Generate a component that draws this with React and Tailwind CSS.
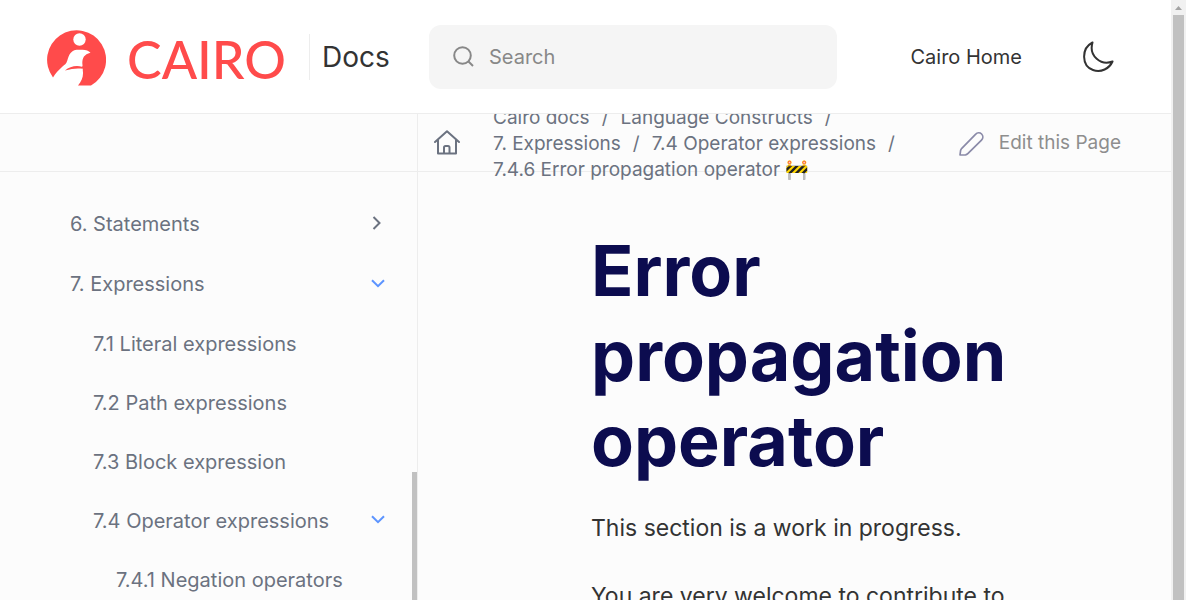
import React from "react";

const sections = [
  { label: "6. Statements", level: 0, state: "closed" },
  { label: "7. Expressions", level: 0, state: "open" },
  { label: "7.1 Literal expressions", level: 1 },
  { label: "7.2 Path expressions", level: 1 },
  { label: "7.3 Block expression", level: 1 },
  { label: "7.4 Operator expressions", level: 1, state: "open" },
  { label: "7.4.1 Negation operators", level: 2 },
];

const indents = [
  "h-[60px] pl-[70px]",
  "h-[59px] pl-[93px]",
  "h-[60px] pl-[116px]",
];

const crumbs = [
  "Cairo docs",
  "Language Constructs",
  "7. Expressions",
  "7.4 Operator expressions",
];

function CairoMark() {
  return (
    <svg width="60" height="58" viewBox="0 0 60 58" aria-hidden="true">
      <path
        fill="#ff4b4b"
        d="M7 49.500A29.500 29.500 0 1 1 45 57.500H32C35.500 53.500 37.200 49 37 44.500C36.900 42.800 36.500 41.500 37 40.800C31.500 40 26 40.500 19 42.500C23.500 38.700 30 37 36 38.800C37 38 36.300 36.500 36.300 35C36.400 30 38 26.500 44.500 24.800C42.500 22.300 39 21.500 35 21.800H30.500C24 22.800 22.800 28 21.300 32.500C20.300 36 18.500 36.800 16.500 38.500C12.500 42 9.500 45.500 7 49.500Z"
      />
      <circle cx="33.500" cy="11.500" r="6.200" fill="#fff" />
    </svg>
  );
}

function Chevron({ open }) {
  return open ? (
    <svg width="14" height="9" viewBox="0 0 14 9" fill="none" aria-hidden="true">
      <path d="M1 1.200L7 7.200L13 1.200" stroke="#5c94ff" strokeWidth="2" />
    </svg>
  ) : (
    <svg width="14" height="14" viewBox="0 0 14 14" fill="none" aria-hidden="true">
      <path d="M2.500 1L8.500 7L2.500 13" stroke="#6b7280" strokeWidth="2" />
    </svg>
  );
}

export default function App() {
  return (
    <div className="flex h-screen overflow-hidden bg-[#fcfcfc] font-['Inter',sans-serif]">
      <div className="flex min-w-0 flex-1 flex-col">
        <header className="relative z-10 flex h-[114px] shrink-0 items-center border-b border-[#ededed] bg-white pr-[57px] pl-[46px]">
          <a href="#cairo" className="flex items-center gap-[21px] text-[#ff4b4b]">
            <CairoMark />
            <span className="w-[161px] pt-1 font-['Lato',sans-serif] text-[52px] leading-[56px] font-medium">
              CAIRO
            </span>
          </a>
          <a
            href="#docs"
            className="ml-[21px] flex h-[46px] w-[120px] shrink-0 items-center border-l border-[#ededed] pl-3 text-[28px] text-[#333]"
          >
            Docs
          </a>
          <label className="flex h-16 w-[408px] shrink-0 items-center gap-[15px] rounded-xl bg-[#f5f5f5] pl-6 text-[#888]">
            <svg width="21" height="21" viewBox="0 0 21 21" fill="none" stroke="currentColor" strokeWidth="2" aria-hidden="true">
              <circle cx="9.500" cy="9.500" r="8.300" />
              <path d="M15 15L20 20" />
            </svg>
            <input
              type="search"
              aria-label="Search"
              placeholder="Search"
              className="min-w-0 flex-1 bg-transparent text-[20px] outline-none placeholder:text-[#888]"
            />
          </label>
          <a href="#home" className="ml-auto text-[20px] whitespace-nowrap text-[#333]">
            Cairo Home
          </a>
          <button type="button" aria-label="Dark mode" className="ml-[60px]">
            <svg width="32" height="32" viewBox="0 0 32 32" fill="none" stroke="#333" strokeWidth="2" strokeLinejoin="round" aria-hidden="true">
              <path d="M10.500 1.500C-1 7.500-.5 25 11 29C19 32 27.500 27.500 30.500 20.500C19 25 6.500 15 10.500 1.500Z" />
            </svg>
          </button>
        </header>

        <div className="flex h-[58px] shrink-0 border-b border-[#ededed]">
          <div className="w-[418px] shrink-0 border-r border-[#ededed]" />
          <div className="flex min-w-0 flex-1 items-center pr-[50px] pl-4">
            <a href="#index" aria-label="Home">
              <svg width="26" height="26" viewBox="0 0 26 26" fill="none" stroke="#6b7280" strokeWidth="2" strokeLinecap="round" strokeLinejoin="round" aria-hidden="true">
                <path d="M1 12L13 1.200L25 12M4 10V23.500H22V10" />
                <path d="M10 23V17.500Q10 16 11.500 16H14Q15.500 16 15.500 17.500V23" />
              </svg>
            </a>
            <nav aria-label="Breadcrumb" className="ml-[33px] flex min-w-0 flex-1 flex-wrap pt-0.5 text-[19px] leading-[26px] whitespace-nowrap text-[#6b7280]">
              {crumbs.map((crumb) => (
                <span key={crumb}>
                  <a href="#crumb">{crumb}</a>
                  <span className="mx-3">/</span>
                </span>
              ))}
              <span>7.4.6 Error propagation operator 🚧</span>
            </nav>
            <a href="#edit" className="ml-[30px] flex shrink-0 items-center gap-[15px] pt-0.5 text-[19px] text-[#8e8e8e]">
              <svg width="25" height="25" viewBox="0 0 25 25" fill="none" stroke="#8a8aa8" strokeWidth="1.700" strokeLinejoin="round" aria-hidden="true">
                <path d="M1 24L1.600 19.500Q1.900 18.300 2.800 17.300L16.500 3.300C18.300 1.500 21 1.500 22.600 3C24.200 4.600 24.300 7.300 22.500 9.100L8.800 22.700Q7.800 23.700 6.500 23.800Z" />
              </svg>
              Edit this Page
            </a>
          </div>
        </div>

        <div className="flex min-h-0 flex-1">
          <aside className="relative w-[418px] shrink-0 overflow-hidden border-r border-[#ededed]">
            <nav aria-label="Contents" className="pt-[22px]">
              <ul>
                {sections.map((s) => (
                  <li key={s.label} className={`flex items-center justify-between pr-[32px] text-[20px] text-[#6b7280] ${indents[s.level]}`}>
                    <a href="#section">{s.label}</a>
                    {s.state && (
                      <button type="button" aria-label={`Toggle ${s.label}`} className="pb-0.5">
                        <Chevron open={s.state === "open"} />
                      </button>
                    )}
                  </li>
                ))}
              </ul>
            </nav>
            <div className="absolute top-[300px] right-0 bottom-0 w-[5px] bg-[#c1c1c1]" />
          </aside>
          <main className="min-w-0 flex-1 overflow-hidden pt-[56px] pr-[140px] pl-[173px]">
            <h1 className="text-[70px] leading-[85px] font-bold text-[#0c0c4f]">
              Error propagation operator
            </h1>
            <p className="mt-[28px] text-[23px] leading-[34px] text-[#333]">
              This section is a work in progress.
            </p>
            <p className="mt-[34px] text-[23px] leading-[34px] text-[#333]">
              You are very welcome to contribute to
            </p>
          </main>
        </div>
      </div>
      <div aria-hidden="true" className="flex w-[15px] shrink-0 flex-col items-center bg-[#f1f1f1]">
        <div className="flex h-[15px] shrink-0 items-center">
          <svg width="7" height="4" viewBox="0 0 7 4">
            <path d="M0 4L3.500 0L7 4Z" fill="#a3a3a3" />
          </svg>
        </div>
        <div className="w-[11px] flex-1 bg-[#c1c1c1]" />
      </div>
    </div>
  );
}
